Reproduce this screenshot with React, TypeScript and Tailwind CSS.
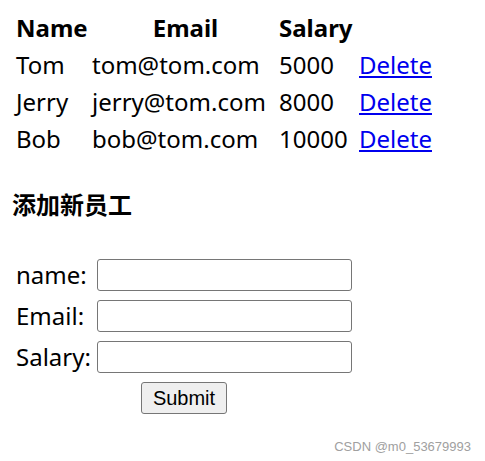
const employees = [
  { name: 'Tom', email: 'tom@tom.com', salary: '5000' },
  { name: 'Jerry', email: 'jerry@tom.com', salary: '8000' },
  { name: 'Bob', email: 'bob@tom.com', salary: '10000' },
];

const fields = ['name:', 'Email:', 'Salary:'];

const App = () => {
  return (
    <div className="relative min-h-[461px] bg-white px-3 pt-[9px] text-[24px] text-black [font-family:'Noto_Sans','Noto_Sans_CJK_SC',sans-serif]">
      {/* Table */}
      <div className="flex flex-col pl-1">
        <div className="flex h-[37px] items-center font-bold">
          <div className="w-[76px]">Name</div>
          <div className="w-[187px] text-center">Email</div>
          <div className="w-[80px]">Salary</div>
        </div>
        {employees.map((e) => (
          <div key={e.name} className="flex h-[37px] items-center">
            <div className="w-[76px]">{e.name}</div>
            <div className="w-[187px]">{e.email}</div>
            <div className="w-[80px]">{e.salary}</div>
            <a href="#" className="text-[#0000ee] underline">Delete</a>
          </div>
        ))}
      </div>

      {/* Form */}
      <h4 className="mt-[33px] text-[24px] font-bold leading-[28px] [font-family:'Noto_Sans_CJK_SC',sans-serif]">添加新员工</h4>
      <div className="mt-[41px] flex flex-col gap-[9px] pl-1">
        {fields.map((f) => (
          <div key={f} className="flex h-[32px] items-center">
            <span className="w-[81px]">{f}</span>
            <input className="h-[32px] w-[255px] rounded-[3px] border border-[#767676] bg-white" />
          </div>
        ))}
        <div className="flex pl-[125px]">
          <button
            type="button"
            className="h-[32px] w-[86px] rounded-[3px] border border-[#767676] bg-[#efefef] text-[20px] [font-family:'Liberation_Sans',sans-serif]"
          >
            Submit
          </button>
        </div>
      </div>

      <div className="absolute bottom-[5px] right-[14px] text-[13px] text-[#a0a0a0] [font-family:'Liberation_Sans',sans-serif]">
        CSDN @m0_53679993
      </div>
    </div>
  );
};

export default App;
